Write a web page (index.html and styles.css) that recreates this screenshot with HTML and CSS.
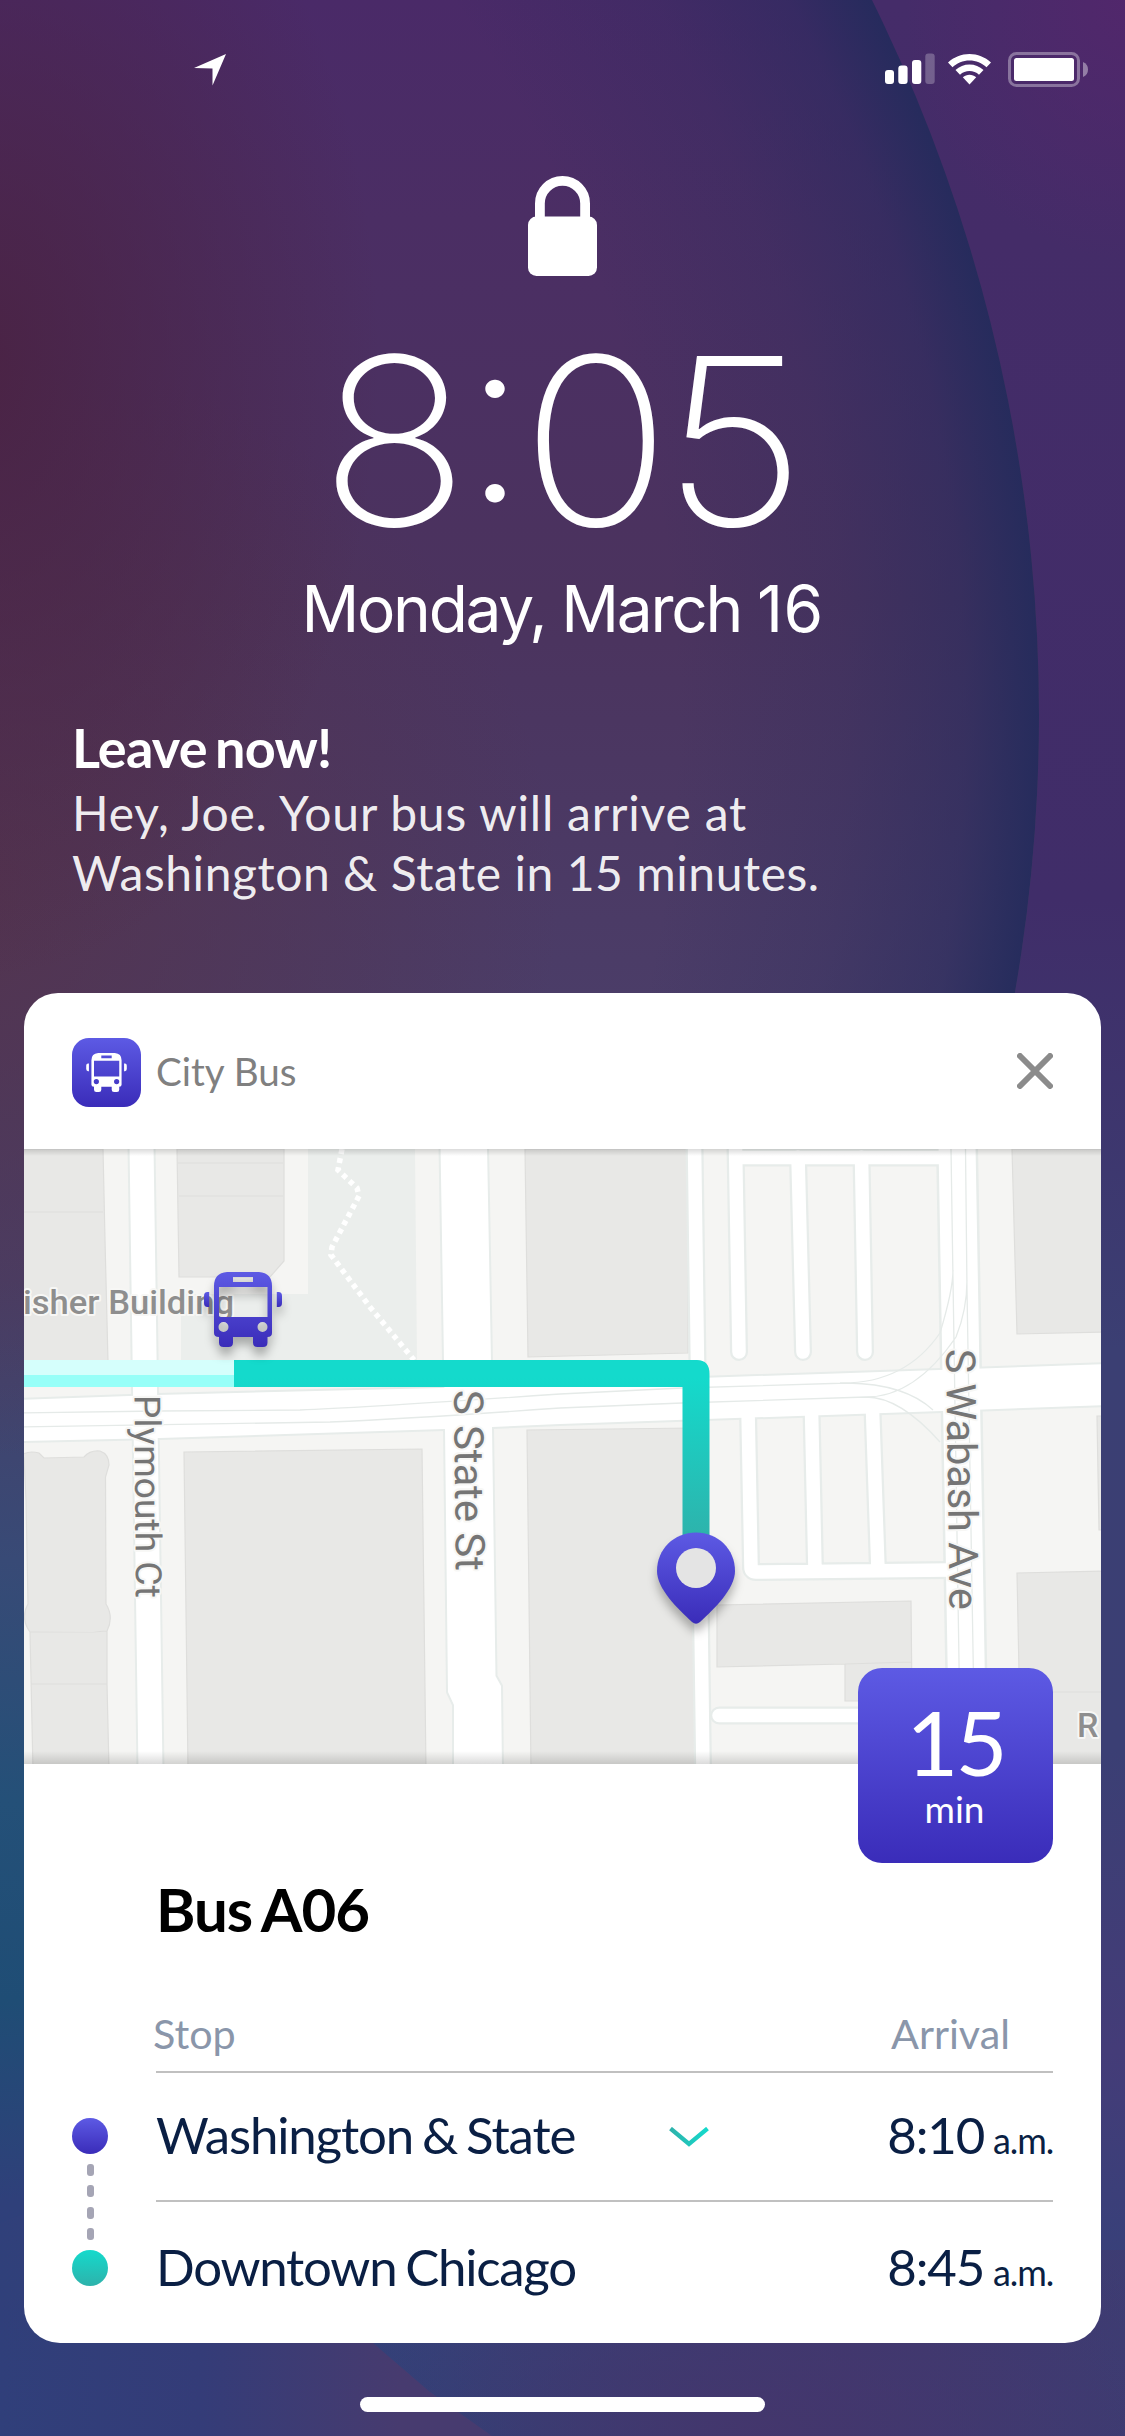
FILE: index.html
```html
<!DOCTYPE html>
<html lang="en">
<head>
<meta charset="utf-8">
<title>City Bus</title>
<link rel="stylesheet" href="styles.css">
</head>
<body>
<svg class="defs" aria-hidden="true">
  <defs>
    <linearGradient id="indigo" x1="0" y1="0" x2="0" y2="1"><stop offset="0" stop-color="#5d5ae4"/><stop offset="1" stop-color="#3a2cb9"/></linearGradient>
    <linearGradient id="teal" x1="1" y1="0" x2="0" y2="0"><stop offset="0" stop-color="#14dacc"/><stop offset="1" stop-color="#2eb2ab"/></linearGradient>
    <linearGradient id="tealDown" gradientUnits="userSpaceOnUse" x1="0" y1="1360" x2="0" y2="1540"><stop offset="0.1" stop-color="#14dacc"/><stop offset="1" stop-color="#2eb2ab"/></linearGradient>
    <symbol id="bus" viewBox="0 0 78 75">
      <path fill-rule="evenodd" d="M23 0H55Q68 1 68 14V61Q68 65 63.500 65V70.500Q63.500 75 59 75H53.500Q49 75 49 70.500V65H29V70.500Q29 75 24.500 75H19.500Q15 75 15 70.500V65Q10 65 10 61V14Q10 1 23 0ZM29 5V10H49V5ZM15 15V45H63.500V15ZM19.500 50A5 5 0 1 0 19.500 60A5 5 0 1 0 19.500 50ZM58.500 50A5 5 0 1 0 58.500 60A5 5 0 1 0 58.500 50Z"/>
      <path d="M5.200 20V35H3.500Q0 35 0 31V24Q0 20 3.500 20ZM72.800 20V35H74.500Q78 35 78 31V24Q78 20 74.500 20Z"/>
    </symbol>
  </defs>
</svg>
<main class="screen">
  <div class="backdrop"><div class="orb"></div><div class="fold"></div></div>

  <header class="status">
    <svg class="locate" width="32" height="32" viewBox="0 0 32 32"><path fill="#fff" d="M32 0L18.500 31.500V14.500L0 14Z"/></svg>
    <div class="signals">
      <svg width="50" height="31" viewBox="0 0 50 31" fill="#fff"><rect y="17" width="9" height="14" rx="3"/><rect x="13.300" y="12.500" width="9.300" height="18.500" rx="3"/><rect x="27" y="7" width="9.300" height="24" rx="3"/><rect x="40.300" y=".5" width="9.400" height="30.500" rx="3" opacity=".25"/></svg>
      <svg class="wifi" width="43" height="31" viewBox="0 0 43 31" fill="#fff"><path d="M21.500 0C13.500 0 6 3 0 8.500L4.500 13.200C9 9 15 6.500 21.500 6.500S34 9 38.500 13.200L43 8.500C37 3 29.500 0 21.500 0Z"/><path d="M21.500 10.500C16.200 10.500 11.300 12.500 7.500 16L12 20.700C14.600 18.300 18 17 21.500 17S28.400 18.300 31 20.700L35.500 16C31.700 12.500 26.800 10.500 21.500 10.500Z"/><path d="M21.500 20.800C19 20.800 16.700 21.700 14.800 23.300L21.500 30.500L28.200 23.300C26.300 21.700 24 20.800 21.500 20.800Z"/></svg>
      <svg width="80" height="35" viewBox="0 0 80 35"><rect x="1.500" y="1.500" width="69" height="32" rx="7" fill="none" stroke="#fff" stroke-opacity=".35" stroke-width="3"/><rect x="6" y="6" width="60" height="23" rx="2.500" fill="#fff"/><path fill="#fff" fill-opacity=".4" d="M75 10Q80 12 80 17.500T75 25Z"/></svg>
    </div>
  </header>

  <section class="clock">
    <svg class="lock" width="69" height="100" viewBox="0 0 69 100"><path fill="none" stroke="#fff" stroke-width="9.800" d="M11.900 44V27.500A22.600 22.600 0 0 1 57.100 27.500V44"/><rect y="40.500" width="69" height="59.500" rx="8.500" fill="#fff"/></svg>
    <div class="time">8:05</div>
    <div class="date">Monday, March <span class="day">16</span></div>
  </section>

  <section class="notice">
    <h1>Leave now!</h1>
    <p>Hey, Joe. Your bus will arrive at</p>
    <p class="tight">Washington &amp; State in 15 minutes.</p>
  </section>

  <article class="card">
    <header class="card-head">
      <span class="app-icon"><svg width="41" height="39"><use href="#bus"/></svg></span>
      <span class="app-name">City Bus</span>
      <svg class="close" width="36" height="36" viewBox="0 0 36 36"><path fill="none" stroke="#8b8b8b" stroke-width="6" stroke-linecap="round" d="M3 3L33 33M33 3L3 33"/></svg>
    </header>

    <div class="map-wrap">
      <svg class="map" width="1077" height="615" viewBox="24 1149 1077 615">
        <g class="park"><path d="M308 1149H415L417 1362H181V1294H308Z"/></g>
        <path class="trail" d="M342 1149L338 1170L357 1188L359 1196L332 1247L331 1255L370 1307L414 1360"/>
        <g class="building">
          <path d="M20 1149H103L105 1240L108 1362H20ZM20 1212H103"/>
          <path d="M177 1149H284V1261L270 1277H179ZM178 1163H283M179 1196H283"/>
          <path d="M525 1149H688V1353L528 1357Z"/>
          <path d="M1012 1149H1105V1332L1017 1334Z"/>
          <path d="M20 1456Q28 1450 39 1453L44 1458L84 1457Q90 1450 100 1451Q109 1454 109 1465L105.500 1477L106 1604Q114 1617 107 1631L107 1684L109 1770H33L30 1632Q20 1618 28 1604L26 1500L24 1458ZM30 1632H93L107 1631M31 1684H107"/>
          <path d="M184 1452L422 1449L426 1770H188Z"/>
          <path d="M527 1430L692 1428L698 1770H531Z"/>
          <path d="M717 1605L911 1601L912 1701H845V1664L717 1667ZM845 1664L912 1662"/>
          <path d="M1097 1416H1105V1530H1099Z"/>
          <path d="M1017 1573L1105 1571V1770H1021ZM1021 1692H1105"/>
        </g>
        <g class="casing">
          <path d="M141.500 1145L150.500 1770" stroke-width="28"/>
          <path class="poly" d="M440.500 1145H487L491 1362L492 1427L495.500 1676L501 1686L502 1770H454V1705L448 1692L445 1428L444 1362Z"/>
          <path d="M694.500 1145L703 1770" stroke-width="18"/>
          <path d="M957 1145L968 1770" stroke-width="42"/>
          <path d="M735.400 1140L739 1352M798 1157L803 1352M861.500 1157L865 1352M738 1157.500H945M719 1715.500H960M748 1410L751 1567Q751 1572 756 1572L950 1570M811.500 1410L815 1570M872.500 1410L878 1570" stroke-width="18"/>
          <path class="poly" d="M20 1400L157 1395L440 1388L560 1381L700 1378L939 1370L1105 1364V1405L942 1411L560 1424L444 1429L160 1438L20 1441Z"/>
        </g>
        <g class="road">
          <path d="M141.500 1145L150.500 1770" stroke-width="24"/>
          <path class="poly" d="M440.500 1145H487L491 1362L492 1427L495.500 1676L501 1686L502 1770H454V1705L448 1692L445 1428L444 1362Z"/>
          <path d="M694.500 1145L703 1770" stroke-width="13.500"/>
          <path d="M957 1145L968 1770" stroke-width="37"/>
          <path d="M735.400 1140L739 1352M798 1157L803 1352M861.500 1157L865 1352M738 1157.500H945M719 1715.500H960M748 1410L751 1567Q751 1572 756 1572L950 1570M811.500 1410L815 1570M872.500 1410L878 1570" stroke-width="13.500"/>
          <path class="poly" d="M20 1400L157 1395L440 1388L560 1381L700 1378L939 1370L1105 1364V1405L942 1411L560 1424L444 1429L160 1438L20 1441Z"/>
        </g>
        <path class="rail" d="M20 1413L160 1411L300 1410Q360 1408 560 1394L682 1388L848 1383Q905 1384 933 1410M20 1427L330 1422Q420 1418 560 1408L682 1403L866 1397Q900 1397 940 1442M951 1149L953 1280L960.700 1770M965.500 1149L967 1290L975 1770M953 1270Q953 1290 940 1333Q905 1384 840 1383M967 1280Q967 1310 956 1337Q915 1397 866 1397"/>
        <g class="labels">
          <text class="place" x="23" y="1314" textLength="211" lengthAdjust="spacingAndGlyphs">isher Building</text>
          <text class="place" x="1077" y="1737">R</text>
          <text class="street" font-size="36" transform="translate(134.500 1395) rotate(89.600)" textLength="203" lengthAdjust="spacingAndGlyphs">Plymouth Ct</text>
          <text class="street" font-size="41" transform="translate(454 1390) rotate(89.400)" textLength="181" lengthAdjust="spacingAndGlyphs">S State St</text>
          <text class="street" font-size="41" transform="translate(946 1349) rotate(89.200)" textLength="261" lengthAdjust="spacingAndGlyphs">S Wabash Ave</text>
        </g>
        <rect x="24" y="1360" width="211" height="15" fill="#d5fffc"/>
        <rect x="24" y="1375" width="211" height="12" fill="#97fff8"/>
        <path fill="url(#tealDown)" d="M234 1360H697Q709.500 1360 709.500 1374V1545H682.500V1387H234Z"/>
        <g class="lifted" fill="url(#indigo)">
          <use href="#bus" x="204" y="1272" width="78" height="75"/>
        </g>
        <g class="lifted">
          <path fill="url(#indigo)" d="M696 1532.500C718 1532.500 735 1549 735 1571C735 1589 714 1609 700 1622Q696 1625.500 692 1622C678 1609 657 1589 657 1571C657 1549 674 1532.500 696 1532.500Z"/>
        </g>
        <circle cx="696" cy="1568" r="20" fill="#e4e4e4"/>
      </svg>
      <div class="eta"><span class="eta-value">15</span><span class="eta-unit">min</span></div>
    </div>

    <div class="details">
      <h2>Bus A06</h2>
      <div class="row head"><span>Stop</span><span class="arrival">Arrival</span></div>
      <div class="stops">
        <div class="timeline"><i class="dot from"></i><i class="dash"></i><i class="dash"></i><i class="dash"></i><i class="dash"></i><i class="dot to"></i></div>
        <div class="row stop">
          <span class="name">Washington &amp; State</span>
          <svg width="40" height="20" viewBox="0 0 40 20"><path fill="none" stroke="url(#teal)" stroke-width="4.300" d="M1.500 1.500L20 17L38.500 1.500"/></svg>
          <span class="at">8:10 <small>a.m.</small></span>
        </div>
        <div class="row stop last">
          <span class="name">Downtown Chicago</span>
          <span class="at">8:45 <small>a.m.</small></span>
        </div>
      </div>
    </div>
  </article>
  <div class="home-bar"></div>
</main>
</body>
</html>
```
FILE: styles.css
```css
* { box-sizing: border-box; margin: 0; padding: 0; }
body { font-family: Lato, "Open Sans", sans-serif; background: #3d3a70; }
svg { display: block; flex: none; }
.defs { position: absolute; width: 0; height: 0; }

.screen { position: relative; width: 1125px; height: 2436px; overflow: hidden; display: flex; flex-direction: column; color: #fff; }

/* wallpaper */
.backdrop {
  position: absolute; inset: 0; z-index: -1;
  background:
    radial-gradient(ellipse 220px 260px at 1125px 0, rgba(84,38,108,.8), rgba(84,38,108,0)),
    linear-gradient(90deg, #30407a 0, rgba(48,64,122,0) 40%) 0 2000px / 100% 436px no-repeat,
    radial-gradient(ellipse 480px 260px at 760px 2436px, rgba(68,54,108,.95), rgba(68,54,108,0)),
    linear-gradient(90deg, transparent 0 40%, rgba(64,56,112,.9) 75%, rgba(62,60,114,.9) 100%) 0 2250px / 100% 186px no-repeat,
    linear-gradient(180deg, #452c69 0, #442c68 240px, #402d69 900px, #3b3f73 1350px, #3b3f74 1750px, #443c78 2050px, #33427a 2340px, #2e4279 2436px);
}
.orb {
  position: absolute; inset: 0;
  clip-path: circle(1614px at -575px 715px);
  background:
    radial-gradient(circle at -575px 715px, rgba(34,44,94,0) 1250px, rgba(40,44,94,.24) 1420px, rgba(37,43,94,.52) 1540px, rgba(35,43,92,.92) 1614px) 0 0 / 100% 1010px no-repeat,
    radial-gradient(ellipse 400px 620px at -20px 360px, rgba(74,33,64,.85), rgba(74,33,64,0)),
    radial-gradient(ellipse 620px 560px at -60px 900px, rgba(84,50,74,.85), rgba(84,50,74,0)),
    linear-gradient(180deg, #4a2a68 0, #4b2e64 220px, #4b335e 600px, #4b3d68 1000px, #483f68 1280px, #384a76 1560px, #245078 1800px, #1f4d75 2000px, #2f407a 2200px);
}
.fold {
  position: absolute; left: 0; top: 2300px; width: 500px; height: 136px;
  clip-path: polygon(0 0, 350px 0, 373px 43px, 430px 92px, 492px 136px, 0 136px);
  background: linear-gradient(90deg, #303f7a 0, #343c78 40%, #473b6f 80%);
}

/* status bar */
.status { display: flex; justify-content: space-between; align-items: flex-start; height: 176px; padding: 52px 37px 0 194px; }
.locate { margin-top: 2px; }
.signals { display: flex; }
.signals svg:first-child { margin: 1px 13px 0 0; }
.wifi { margin: 2px 17px 0 0; }

/* clock */
.clock { display: flex; flex-direction: column; align-items: center; height: 541px; font-family: Inter, Roboto, sans-serif; }
.time { margin-top: 48px; font-size: 234px; line-height: 234px; font-weight: 200; letter-spacing: -8px; font-feature-settings: "calt" 1; white-space: nowrap; transform: translateX(-4px) scaleX(1.06); }
.date { margin-top: 19px; font-size: 64px; line-height: 64px; letter-spacing: -2.25px; white-space: nowrap; }
.day { letter-spacing: .5px; }

/* message */
.notice { height: 276px; padding-left: 72px; }
.notice h1 { margin: 1px 0 5px; font-size: 54px; line-height: 60px; font-weight: 700; letter-spacing: -.8px; word-spacing: -4px; }
.notice p { font-size: 48px; line-height: 60px; letter-spacing: .78px; color: rgba(255,255,255,.93); }
.notice .tight { letter-spacing: .55px; }

/* card */
.card { width: 1077px; height: 1350px; margin: 0 24px; border-radius: 34px 34px 36px 36px; overflow: hidden; background: #fff; color: #0a1f44; }
.card-head { display: flex; align-items: center; height: 156px; padding: 3px 48px 0; }
.app-icon { display: flex; align-items: center; justify-content: center; width: 69px; height: 69px; border-radius: 17px; background: linear-gradient(#5d5ae4, #3a2cb9); fill: #fff; }
.app-name { margin: 0 auto 3px 15px; font-size: 38.6px; line-height: 48px; color: #808080; }
.close { margin-bottom: 3px; }

.map-wrap { position: relative; height: 615px; }
.map { background: #f5f5f3; }
.map-wrap::before {
  content: ""; position: absolute; inset: 0; pointer-events: none;
  background: linear-gradient(rgba(0,0,0,.14), transparent) 0 0 / 100% 7px no-repeat, linear-gradient(transparent, rgba(0,0,0,.14)) 0 100% / 100% 13px no-repeat;
}
.park { fill: #ebeeec; }
.trail { fill: none; stroke: #fff; stroke-width: 5.5; stroke-dasharray: 5 4.3; }
.building { fill: #e8e8e6; stroke: #dededc; stroke-width: 1.2; }
.casing { fill: none; stroke: #e7ecea; stroke-linecap: round; }
.casing .poly { fill: #e7ecea; stroke-width: 4; }
.road { fill: none; stroke: #fff; stroke-linecap: round; }
.road .poly { fill: #fff; stroke: none; }
.rail { fill: none; stroke: #e5eae8; stroke-width: 1.3; }
.labels { font-family: Roboto, "Noto Sans", sans-serif; stroke: #f7f7f5; stroke-width: 4; stroke-linejoin: round; paint-order: stroke; }
.place { font-size: 34px; font-weight: 500; fill: #8e8e8e; }
.street { fill: #757575; }
.lifted { filter: drop-shadow(0 8px 5px rgba(0,0,0,.28)); }

.eta {
  position: absolute; right: 48px; top: 519px; width: 195px; height: 195px; border-radius: 24px;
  display: flex; flex-direction: column; align-items: center; color: #fff;
  background: linear-gradient(#5d5ae4, #3a2cb9);
}
.eta-value { margin-top: 28px; font-size: 90px; line-height: 90px; letter-spacing: -3px; }
.eta-unit { margin: 5px 2px 0 0; font-size: 37px; line-height: 36px; }

/* stop list */
.details { padding: 109px 48px 0 132px; }
.details h2 { height: 135px; font-size: 60px; line-height: 72px; font-weight: 700; letter-spacing: -1px; word-spacing: -3px; color: #000; }
.row { display: flex; border-bottom: 2px solid #c0c0c0; white-space: nowrap; }
.head { height: 65px; font-size: 41.3px; line-height: 50px; color: #8a96aa; }
.head span:first-child { margin-left: -3px; }
.arrival { margin: 0 43px 0 auto; }
.stops { position: relative; }
.stop { height: 129px; padding-top: 32px; font-size: 51px; line-height: 60px; letter-spacing: -1.15px; word-spacing: -3px; }
.stop svg { margin: 22px 0 0 94px; }
.stop.last { border: 0; padding-top: 35px; }
.stop.last .name { letter-spacing: -1.25px; }
.at { margin-left: auto; }
.at small { font-size: 36px; }
.timeline { position: absolute; left: -84px; top: 45px; width: 36px; height: 168px; display: flex; flex-direction: column; align-items: center; justify-content: space-between; }
.dot { width: 36px; height: 36px; border-radius: 50%; }
.from { background: linear-gradient(#5d5ae4, #3a2cb9); }
.to { background: linear-gradient(#14dacc, #2eb2ab); }
.dash { width: 7px; height: 12px; border-radius: 3px; background: #a5a5b5; }

.home-bar { width: 405px; height: 15px; margin: 54px auto 0; border-radius: 8px; background: #fff; }
```
